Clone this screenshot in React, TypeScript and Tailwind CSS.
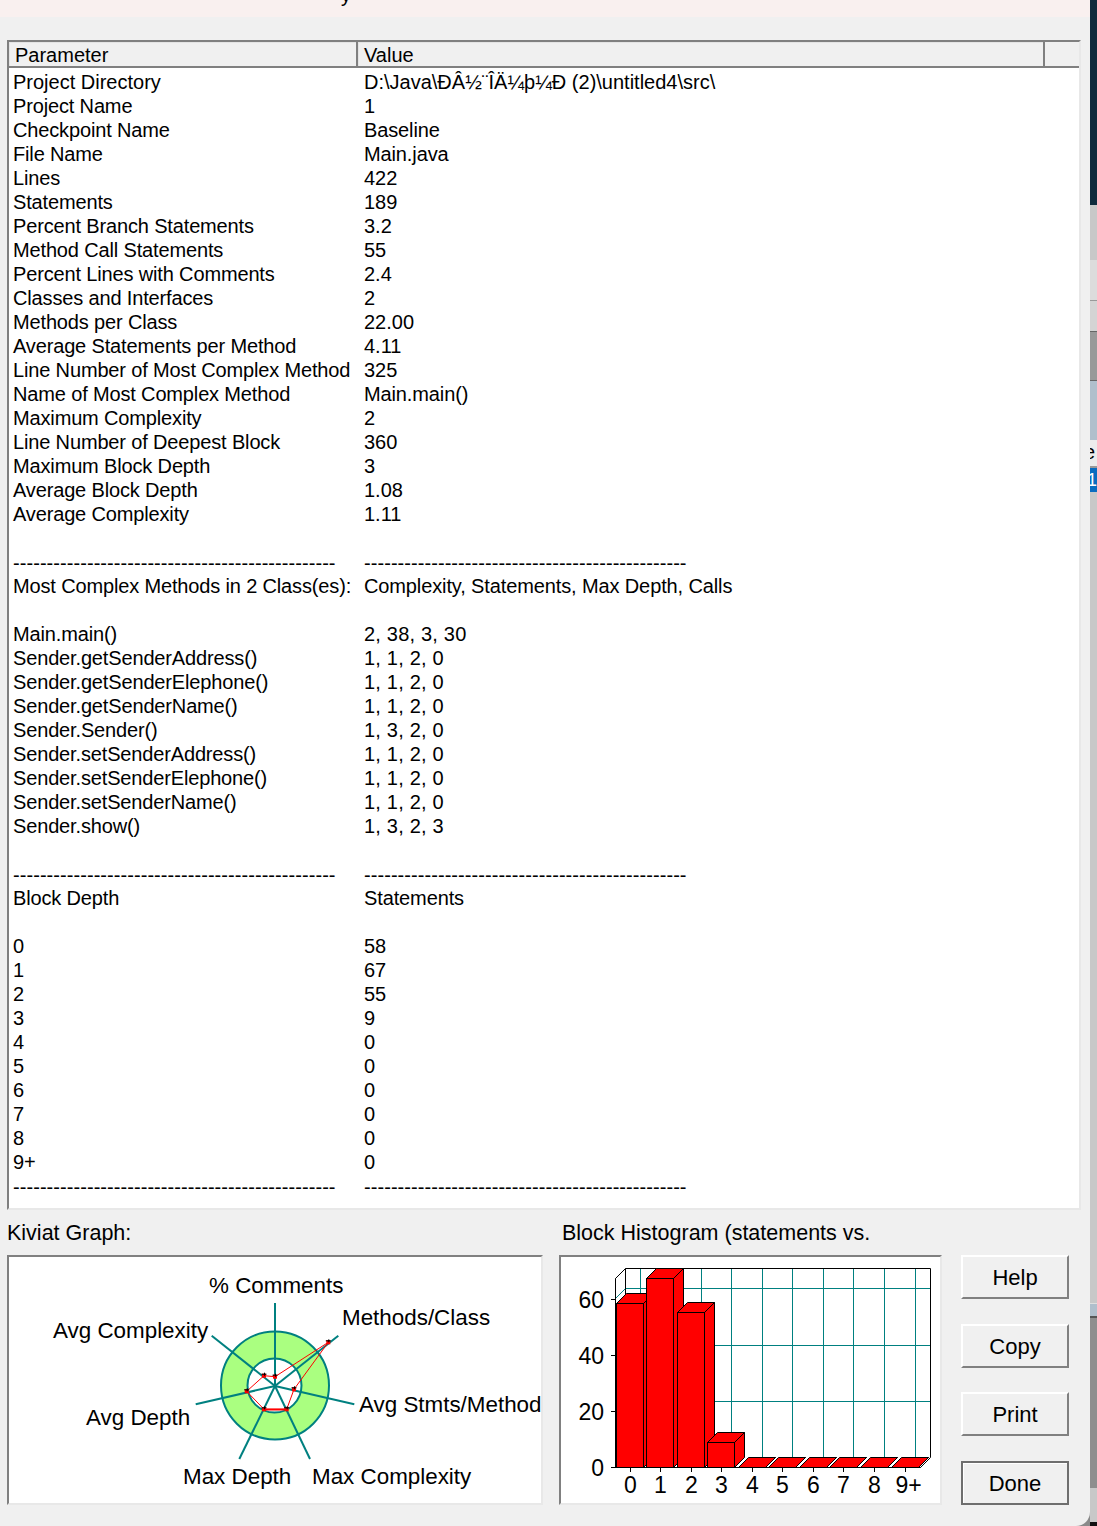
const dashes = '------------------------------------------------';

const rows: [string, string][] = [
  ['Project Directory', 'D:\\Java\\ÐÂ½¨ÎÄ¼þ¼Ð (2)\\untitled4\\src\\'],
  ['Project Name', '1'],
  ['Checkpoint Name', 'Baseline'],
  ['File Name', 'Main.java'],
  ['Lines', '422'],
  ['Statements', '189'],
  ['Percent Branch Statements', '3.2'],
  ['Method Call Statements', '55'],
  ['Percent Lines with Comments', '2.4'],
  ['Classes and Interfaces', '2'],
  ['Methods per Class', '22.00'],
  ['Average Statements per Method', '4.11'],
  ['Line Number of Most Complex Method', '325'],
  ['Name of Most Complex Method', 'Main.main()'],
  ['Maximum Complexity', '2'],
  ['Line Number of Deepest Block', '360'],
  ['Maximum Block Depth', '3'],
  ['Average Block Depth', '1.08'],
  ['Average Complexity', '1.11'],
  ['', ''],
  [dashes, dashes],
  ['Most Complex Methods in 2 Class(es):', 'Complexity, Statements, Max Depth, Calls'],
  ['', ''],
  ['Main.main()', '2, 38, 3, 30'],
  ['Sender.getSenderAddress()', '1, 1, 2, 0'],
  ['Sender.getSenderElephone()', '1, 1, 2, 0'],
  ['Sender.getSenderName()', '1, 1, 2, 0'],
  ['Sender.Sender()', '1, 3, 2, 0'],
  ['Sender.setSenderAddress()', '1, 1, 2, 0'],
  ['Sender.setSenderElephone()', '1, 1, 2, 0'],
  ['Sender.setSenderName()', '1, 1, 2, 0'],
  ['Sender.show()', '1, 3, 2, 3'],
  ['', ''],
  [dashes, dashes],
  ['Block Depth', 'Statements'],
  ['', ''],
  ['0', '58'],
  ['1', '67'],
  ['2', '55'],
  ['3', '9'],
  ['4', '0'],
  ['5', '0'],
  ['6', '0'],
  ['7', '0'],
  ['8', '0'],
  ['9+', '0'],
  [dashes, dashes],
];

// Screen coordinates, the svgs use a viewBox in page pixels
const kiviatSpokes = [
  [275, 1303],
  [338.3, 1335.7],
  [354.3, 1404.3],
  [310, 1459],
  [239.3, 1459],
  [195.7, 1404.3],
  [211.7, 1335.7],
];

const kiviatPoints = [
  [275, 1376.7],
  [328.3, 1342.3],
  [294, 1389.3],
  [286.7, 1409.3],
  [264, 1409.3],
  [246.7, 1391.3],
  [264, 1375.7],
];

const kiviatLabels: [string, number, number][] = [
  ['% Comments', 209, 1293],
  ['Methods/Class', 342, 1325],
  ['Avg Complexity', 53, 1338],
  ['Avg Stmts/Method', 359, 1412],
  ['Avg Depth', 86, 1425],
  ['Max Depth', 183, 1484],
  ['Max Complexity', 312, 1484],
];

function KiviatGraph() {
  return (
    <svg className="block" width={532} height={246} viewBox="9 1257 532 246">
      <circle cx={275} cy={1385.5} r={54} fill="#aaff80" stroke="#008080" strokeWidth={2} />
      <circle cx={274.5} cy={1385.5} r={27} fill="#fff" stroke="#008080" strokeWidth={2} />
      {kiviatSpokes.map(([x, y]) => (
        <line key={x} x1={275} y1={1386} x2={x} y2={y} stroke="#008080" strokeWidth={2} />
      ))}
      <polygon
        points={kiviatPoints.map((p) => p.join(',')).join(' ')}
        fill="none"
        stroke="#ff0000"
        strokeWidth={1}
      />
      <line x1={264} y1={1409.5} x2={286.7} y2={1409.5} stroke="#ff0000" strokeWidth={2} />
      {kiviatPoints.map(([x, y]) => (
        <g key={x}>
          <rect x={x - 2} y={y - 2} width={4} height={4} fill="#ff0000" />
          <path d={`M${x - 2.5} ${y - 1.5}h5M${x + 0.5} ${y - 3}v3`} stroke="#000" strokeWidth={1} />
        </g>
      ))}
      {kiviatLabels.map(([label, x, y]) => (
        <text key={label} x={x} y={y} fontSize={22.4} fill="#000">
          {label}
        </text>
      ))}
    </svg>
  );
}

const barValues = [58, 67, 55, 9, 0, 0, 0, 0, 0, 0];
const barLabels = ['0', '1', '2', '3', '4', '5', '6', '7', '8', '9+'];
const barLefts = [616, 646, 677, 707, 738, 768, 799, 829, 860, 891];
const gridRows = [1288.5, 1345.5, 1401.5];
const axisTicks: [string, number][] = [
  ['60', 1299.5],
  ['40', 1355.5],
  ['20', 1411.5],
  ['0', 1467.5],
];

function Histogram() {
  return (
    <svg className="block" width={379} height={246} viewBox="561 1257 379 246">
      {gridRows.map((y) => (
        <g key={y}>
          <line x1={625.5} y1={y} x2={930.5} y2={y} stroke="#008080" />
          <line x1={615.5} y1={y + 10} x2={625.5} y2={y} stroke="#008080" />
        </g>
      ))}
      {barLefts.map((left) => (
        <line key={left} x1={left + 24.5} y1={1268.5} x2={left + 24.5} y2={1457.5} stroke="#008080" />
      ))}
      <path
        d="M615.5 1278.5L625.5 1268.5H930.5V1457.5L920.5 1467.5H615.5ZM625.5 1268.5V1457.5"
        fill="none"
        stroke="#000"
      />
      {barValues.map((v, i) => {
        const x = barLefts[i] + 0.5;
        const w = 27;
        const top = 1467.5 - Math.round(v * 2.82);
        return (
          <g key={barLabels[i]} stroke="#000" fill="#ff0000">
            <path d={`M${x + w} ${1467.5}L${x + w + 10} 1457.5V${top - 10}L${x + w} ${top}Z`} />
            <path d={`M${x} ${top}L${x + 10} ${top - 10}H${x + w + 10}L${x + w} ${top}Z`} />
            {v > 0 && <rect x={x} y={top} width={w} height={1467.5 - top} />}
          </g>
        );
      })}
      <line x1={615.5} y1={1467.5} x2={920.5} y2={1467.5} stroke="#000" />
      <line x1={615.5} y1={1278.5} x2={615.5} y2={1467.5} stroke="#000" />
      {axisTicks.map(([l, y]) => (
        <g key={l}>
          <line x1={611} y1={y} x2={616} y2={y} stroke="#000" />
          <text x={604} y={y + 8} textAnchor="end" fontSize={23} fill="#000">
            {l}
          </text>
        </g>
      ))}
      {barLabels.map((l, i) => {
        const x = barLefts[i] + 14.5;
        return (
          <g key={l}>
            <line x1={x} y1={1467} x2={x} y2={1472} stroke="#000" />
            <text x={l === '9+' ? x + 3 : x} y={1493} textAnchor="middle" fontSize={23} fill="#000">
              {l}
            </text>
          </g>
        );
      })}
    </svg>
  );
}

function DialogButton({ label, className }: { label: string; className: string }) {
  return (
    <button className={`w-[108px] h-[44px] bg-[#f0f0f0] border-2 text-[22px] text-black ${className}`}>
      {label}
    </button>
  );
}

function nameTracking(name: string) {
  return name === dashes ? 'tracking-[0.06px]' : 'tracking-[-0.15px]';
}

function valueTracking(value: string) {
  if (value === dashes) return 'tracking-[0.06px]';
  if (/^\d+, /.test(value)) return 'tracking-[0.2px]';
  if (/^[A-Z][a-z]/.test(value)) return 'tracking-[-0.12px]';
  return '';
}

const raised = 'border-t-white border-l-white border-r-[#808080] border-b-[#808080]';
const sunken = 'border-t-2 border-l-2 border-t-[#808080] border-l-[#808080] border-r-2 border-b-2 border-r-[#e8e8e8] border-b-[#e8e8e8]';

export default function App() {
  return (
    <div className="flex w-[1097px] h-[1526px] overflow-hidden bg-[#8a8a8a] font-['Liberation_Sans',Arial,sans-serif] text-black text-[20px]">
      <div className="flex flex-col w-[1090px] h-full bg-[#f0f0f0] rounded-br-[14px]">
        {/* title bar remnant */}
        <div className="h-[17px] shrink-0 bg-[#f9f0ef] overflow-hidden pl-[341px]">
          <span className="block -mt-[17px] text-[20px] leading-[24px]">y</span>
        </div>

        <div className={`ml-[7px] mt-[23px] w-[1074px] h-[1170px] shrink-0 bg-white overflow-hidden ${sunken}`}>
          <div className="flex h-[26px] bg-[#f0f0f0] border-b-2 border-[#808080] text-[20px] leading-[26px]">
            <div className="w-[349px] pl-[6px] border-r-2 border-[#808080] shadow-[inset_1px_1px_0_#e4e4e4]">Parameter</div>
            <div className="w-[687px] pl-[6px] border-r-2 border-[#808080] shadow-[inset_1px_1px_0_#e4e4e4]">Value</div>
            <div className="flex-1" />
          </div>
          <div className="pt-[2px]">
            {rows.map(([name, value], i) => (
              <div
                key={i}
                className={name === dashes ? 'flex h-[24px] pt-[1px] leading-[24px] whitespace-nowrap' : 'flex h-[24px] leading-[24px] whitespace-nowrap'}
              >
                <div className={`w-[355px] pl-[4px] shrink-0 ${i === 0 ? '' : nameTracking(name)}`}>{name}</div>
                <div className={valueTracking(value)}>{value}</div>
              </div>
            ))}
          </div>
        </div>

        <div className="flex ml-[7px] mt-[9px] h-[286px]">
          <div className="flex flex-col w-[552px] shrink-0">
            <div className="h-[36px] text-[21.5px] leading-[29px]">Kiviat Graph:</div>
            <div className={`w-[536px] h-[250px] bg-white ${sunken}`}>
              <KiviatGraph />
            </div>
          </div>
          <div className="flex flex-col w-[402px] shrink-0">
            <div className="h-[36px] pl-[3px] text-[21.5px] leading-[29px] whitespace-nowrap">Block Histogram (statements vs.</div>
            <div className={`w-[383px] h-[250px] bg-white ${sunken}`}>
              <Histogram />
            </div>
          </div>
          <div className="flex flex-col pt-[36px]">
            <DialogButton label="Help" className={raised} />
            <DialogButton label="Copy" className={`mt-[25px] ${raised}`} />
            <DialogButton label="Print" className={`mt-[24px] ${raised}`} />
            <DialogButton
              label="Done"
              className="mt-[25px] border-[#6e6e6e] shadow-[inset_1px_1px_0_#ffffff]"
            />
          </div>
        </div>
      </div>

      {/* what shows of the window behind */}
      <div className="flex flex-col w-[7px] h-full overflow-hidden">
        <div className="h-[205px] bg-[#0f2a3c]" />
        <div className="h-[55px] bg-[#c8c8c8]" />
        <div className="h-[40px] bg-[#dcdcdc]" />
        <div className="h-[31px] bg-[#d4d4d4] border-t border-[#999999]" />
        <div className="h-[49px] bg-[#999999] border-t border-[#666666]" />
        <div className="h-[60px] bg-[#b0bfcc] border-t border-[#666666]" />
        <div className="h-[28px] bg-[#ececec] text-[20px] leading-[24px] overflow-hidden border-b-2 border-[#999999]">
          <span className="block -ml-[6px]">e</span>
        </div>
        <div className="h-[24px] bg-[#0a6cc0] text-white text-[18px] leading-[24px] overflow-hidden">
          <span className="block -ml-[3px]">1</span>
        </div>
        <div className="h-[811px] bg-[#c8c8c8]" />
        <div className="h-[13px] bg-[#b0bfcc] border-t border-[#e0e0e0]" />
        <div className="h-[172px] bg-[#8e8e8e] border-t-2 border-[#555555]" />
        <div className="flex-1 bg-[#c8c8c8]" />
        <div className="h-[4px] bg-[#111111]" />
      </div>
    </div>
  );
}
